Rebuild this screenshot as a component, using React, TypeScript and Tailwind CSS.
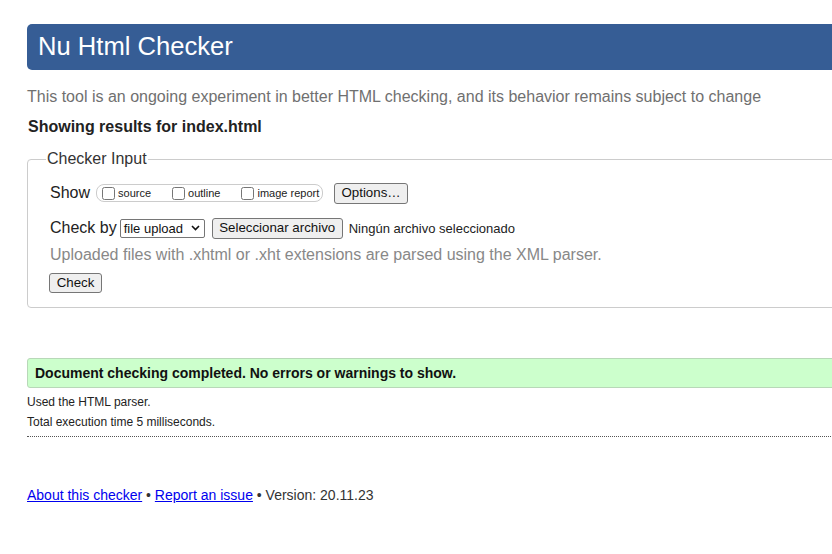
const font = { fontFamily: '"Liberation Sans", Arial, sans-serif' };

function Checkbox({ label }: { label: string }) {
  return (
    <label className="flex items-center">
      <input type="checkbox" className="m-0 h-[13px] w-[13px]" />
      <span className="ml-[3px] text-[11px] leading-none text-[#222]">{label}</span>
    </label>
  );
}

function NativeButton({ children, className = "" }: { children: React.ReactNode; className?: string }) {
  return (
    <button
      className={
        "flex items-center justify-center rounded-[3px] border border-[#767676] bg-[#efefef] text-[13.3px] leading-none text-[#111] " +
        className
      }
    >
      {children}
    </button>
  );
}

export default function App() {
  return (
    <div
      className="h-[554px] w-[832px] overflow-hidden bg-white pl-[27px] pt-[24px] text-[#222]"
      style={font}
    >
      <div className="w-[900px]">
        <h1 className="flex h-[46px] items-center rounded-[5px] bg-[#365d95] pl-[11px] text-[25.6px] font-normal leading-none text-white">
          Nu Html Checker
        </h1>

        <p className="mt-[18px] text-[16px] leading-[18px] text-[#707070]">
          This tool is an ongoing experiment in better HTML checking, and its behavior remains subject to change
        </p>
        <p className="ml-[1px] mt-[12px] text-[16px] font-bold leading-[18px] text-[#222]">
          Showing results for index.html
        </p>

        <fieldset className="mt-[14px] rounded-[4px] border border-[#cccccc] pb-[14px] pl-[18px]">
          <legend className="px-[1px] text-[16px] leading-[18px] text-[#333]">Checker Input</legend>

          <div className="ml-[4px] mt-[13px] flex h-[24px] items-center">
            <span className="text-[16px] leading-none text-[#222]">Show</span>
            <div className="ml-[6px] flex h-[18px] w-[227px] items-center gap-[21px] rounded-[8px] border border-[#cccccc] pl-[5px]">
              <Checkbox label="source" />
              <Checkbox label="outline" />
              <Checkbox label="image report" />
            </div>
            <NativeButton className="ml-[11px] h-[21px] w-[74px]">Options…</NativeButton>
          </div>

          <div className="ml-[4px] mt-[12px] flex h-[22px] items-center">
            <span className="text-[16px] leading-none text-[#222]">Check by</span>
            <div className="ml-[3px] flex h-[19px] w-[85px] items-center justify-between rounded-[2px] border border-[#767676] pl-[3px] pr-[4px] text-[13px] leading-none text-[#111]">
              <span>file upload</span>
              <svg width="9" height="6" viewBox="0 0 9 6" fill="none">
                <path d="M1 1l3.5 3.5L8 1" stroke="#111" strokeWidth="1.6" />
              </svg>
            </div>
            <NativeButton className="ml-[7px] h-[21px] w-[131px]">Seleccionar archivo</NativeButton>
            <span className="ml-[6px] text-[13px] leading-none text-[#222]">Ningún archivo seleccionado</span>
          </div>

          <p className="ml-[4px] mt-[7px] text-[16px] leading-[18px] text-[#888]">
            Uploaded files with .xhtml or .xht extensions are parsed using the XML parser.
          </p>

          <NativeButton className="ml-[3px] mt-[9px] h-[20px] w-[53px]">Check</NativeButton>
        </fieldset>

        <div className="mt-[50px] flex h-[30px] items-center rounded-[3px] border border-[#b8d8b8] bg-[#ccffcc] pl-[7px]">
          <p className="text-[14px] font-bold leading-none text-[#111]">
            Document checking completed. No errors or warnings to show.
          </p>
        </div>

        <p className="mt-[7px] text-[12px] leading-[14px] text-[#222]">Used the HTML parser.</p>
        <p className="mt-[6px] text-[12px] leading-[14px] text-[#222]">Total execution time 5 milliseconds.</p>
        <div className="mt-[7px] border-b border-dotted border-[#555]" />

        <p className="mt-[50px] text-[14px] leading-[16px] text-[#333]">
          <a href="#" className="text-[#0000ee] underline">About this checker</a> •{" "}
          <a href="#" className="text-[#0000ee] underline">Report an issue</a> • Version: 20.11.23
        </p>
      </div>
    </div>
  );
}
